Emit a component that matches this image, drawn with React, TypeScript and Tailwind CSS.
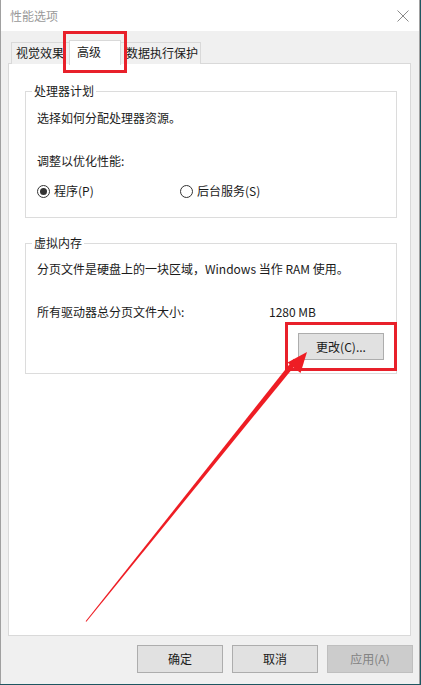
import React from 'react'

const font = { fontFamily: '"Microsoft YaHei UI", "Noto Sans CJK SC", "Liberation Sans", sans-serif' }

function Radio({ checked, label }: { checked?: boolean; label: string }) {
  return (
    <label className="flex items-center gap-[4px]">
      <span className="w-[13px] h-[13px] rounded-full border border-[#333] bg-white flex items-center justify-center">
        {checked && <span className="w-[7px] h-[7px] rounded-full bg-[#333]" />}
      </span>
      <span>{label}</span>
    </label>
  )
}

function GroupBox({ title, className, children }: { title: string; className: string; children: React.ReactNode }) {
  return (
    <div className={`relative border border-[#dcdcdc] ${className}`}>
      <span className="absolute -top-[10px] left-[6px] bg-white px-[2px] leading-[18px]">{title}</span>
      {children}
    </div>
  )
}

export default function App() {
  return (
    <div className="relative w-[421px] h-[685px] bg-[#1e5661] overflow-hidden text-[12px] text-[#1a1a1a]" style={font}>
      <div className="w-[420px] h-[684px] bg-[#f0f0f0] border-l border-r border-[#a0a0a0] flex flex-col">
        {/* 标题栏 */}
        <div className="h-[31px] bg-white flex items-center justify-between pl-[9px] pr-[9px] shrink-0">
          <span className="text-[#999] text-[12px]">性能选项</span>
          <svg width="12" height="12" viewBox="0 0 12 12" className="mr-[1px]">
            <path d="M0.5 0.5 L11.5 11.5 M11.5 0.5 L0.5 11.5" stroke="#8a8a8a" strokeWidth="1" />
          </svg>
        </div>

        {/* 选项卡 */}
        <div className="relative h-[32px] shrink-0">
          <div className="absolute left-[10px] top-[11px] w-[59px] h-[22px] border border-[#d9d9d9] border-b-0 bg-[#f0f0f0] pl-[4px] leading-[20px] overflow-hidden whitespace-nowrap">视觉效果</div>
          <div className="absolute left-[119px] top-[11px] w-[81px] h-[22px] border border-[#d9d9d9] border-b-0 bg-[#f0f0f0] pl-[5px] leading-[20px] whitespace-nowrap">数据执行保护</div>
          <div className="absolute left-[68px] top-[9px] w-[52px] h-[25px] border border-[#d9d9d9] border-b-0 bg-white pl-[7px] leading-[22px] z-10">高级</div>
        </div>

        {/* 内容面板 */}
        <div className="ml-[7px] mr-[8px] h-[573px] bg-white border border-[#d9d9d9] pt-[27px] pl-[16px] pr-[13px] shrink-0">
          <GroupBox title="处理器计划" className="h-[127px] pl-[11px] pt-[17px]">
            <p>选择如何分配处理器资源。</p>
            <p className="mt-[25px]">调整以优化性能:</p>
            <div className="flex mt-[12px]">
              <div className="w-[143px]"><Radio checked label="程序(P)" /></div>
              <Radio label="后台服务(S)" />
            </div>
          </GroupBox>

          <GroupBox title="虚拟内存" className="mt-[25px] h-[131px] pl-[11px] pt-[16px]">
            <p>分页文件是硬盘上的一块区域，Windows 当作 RAM 使用。</p>
            <div className="flex mt-[25px]">
              <span className="w-[232px]">所有驱动器总分页文件大小:</span>
              <span>1280 MB</span>
            </div>
            <div className="flex justify-end pr-[12px] mt-[12px]">
              <button className="w-[86px] h-[27px] bg-[#e1e1e1] border border-[#adadad] text-[12px]">更改(C)...</button>
            </div>
          </GroupBox>
        </div>

        {/* 底部按钮 */}
        <div className="flex justify-end gap-[9px] pr-[6px] pt-[9px]">
          <button className="w-[86px] h-[28px] bg-[#e1e1e1] border border-[#adadad]">确定</button>
          <button className="w-[86px] h-[28px] bg-[#e1e1e1] border border-[#adadad]">取消</button>
          <button className="w-[86px] h-[28px] bg-[#cccccc] border border-[#bfbfbf] text-[#838383]">应用(A)</button>
        </div>
      </div>

      {/* 标注 */}
      <div className="absolute left-[63px] top-[31px] w-[64px] h-[42px] border-[3px] border-[#e8202a] z-20" />
      <div className="absolute left-[285px] top-[322px] w-[112px] h-[49px] border-[3px] border-[#e8202a] z-20" />
      <svg className="absolute left-0 top-0 z-30" width="421" height="685" viewBox="0 0 421 685">
        <polygon points="85.6,621.3 86.4,621.7 297.9,361.9 293.9,358.7" fill="#ee1d24" />
        <polygon points="307,352 300.5,373 287.5,362.5" fill="#ee1d24" />
      </svg>
    </div>
  )
}
